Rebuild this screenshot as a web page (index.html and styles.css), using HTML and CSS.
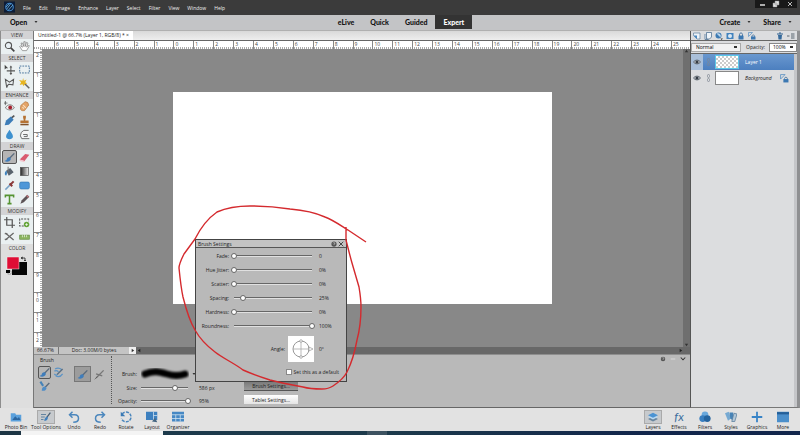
FILE: index.html
```html
<!DOCTYPE html>
<html lang="en">

<head>
    <meta charset="UTF-8">
    <meta name="viewport" content="width=device-width, initial-scale=1.0">
    <title>Untitled-1 - Photo Editor</title>
    <link rel="stylesheet" href="styles.css">
</head>

<body>
    <!-- Shared icons -->
    <svg class="sprite" aria-hidden="true">
        <symbol id="brush" viewBox="0 0 16 16">
            <path d="M15 2 L8 9" stroke="#5b6b7c" stroke-width="2" fill="none" />
            <path d="M9 8 C6 7 4 9 4 11 C3 13 2 13 1 13 C4 15 9 14 10 10 Z" fill="#3f7dbb" />
        </symbol>
        <symbol id="caret" viewBox="0 0 8 8"><path d="M1 2 H7 L4 6 Z" fill="#333" /></symbol>
        <symbol id="eye" viewBox="0 0 16 16">
            <path d="M1 8 C4 3 12 3 15 8 C12 13 4 13 1 8 Z" fill="#cfd3d8" stroke="#4b5560" stroke-width="1.6" />
            <circle cx="8" cy="8" r="3.2" fill="#353c44" />
        </symbol>
        <symbol id="link" viewBox="0 0 8 16">
            <rect x="2" y="1" width="4" height="6" rx="2" fill="none" stroke="#7d8791" stroke-width="1.5" />
            <rect x="2" y="9" width="4" height="6" rx="2" fill="none" stroke="#7d8791" stroke-width="1.5" />
        </symbol>
        <symbol id="lock" viewBox="0 0 16 16">
            <path d="M5 8 V5 C5 1 11 1 11 5 V8" fill="none" stroke="#47749f" stroke-width="2" />
            <rect x="3" y="7" width="10" height="8" rx="1" fill="#3c78b2" />
        </symbol>
        <symbol id="locklayer" viewBox="0 0 16 16">
            <path d="M1 9 V1 H9 M1 9 L9 1" fill="none" stroke="#5f93c4" stroke-width="1.5" />
            <path d="M8 10 V8 C8 5 13 5 13 8 V10" fill="none" stroke="#47749f" stroke-width="1.5" />
            <rect x="6" y="9" width="9" height="6" fill="#3c78b2" />
        </symbol>
    </svg>

    <header class="menubar">
        <svg class="logo" viewBox="0 0 16 16">
            <rect width="16" height="16" fill="#0d1d38" />
            <circle cx="8" cy="8" r="5.5" fill="none" stroke="#3f86c9" stroke-width="1.6" />
            <path d="M4 11 L10 3 M6 13 L13 5 M3 8 L8 3" stroke="#68b2e4" stroke-width="1.2" />
        </svg>
        <nav class="menu">
            <a href="#">File</a>
            <a href="#">Edit</a>
            <a href="#">Image</a>
            <a href="#">Enhance</a>
            <a href="#">Layer</a>
            <a href="#">Select</a>
            <a href="#">Filter</a>
            <a href="#">View</a>
            <a href="#">Window</a>
            <a href="#">Help</a>
        </nav>
        <div class="window-buttons">
            <button type="button" aria-label="Minimize"><svg viewBox="0 0 12 8"><path d="M4 5 H9" stroke="#ddd" stroke-width="1.5" /></svg></button>
            <button type="button" aria-label="Restore"><svg viewBox="0 0 12 8"><path d="M5 1 H9 V5 H5 Z M3 3 H7 V7 H3 Z" fill="#e5e5e5" stroke="#888" stroke-width=".5" /></svg></button>
            <button type="button" aria-label="Close"><svg viewBox="0 0 12 8"><path d="M4 2 L8 6 M8 2 L4 6" stroke="#bbb" stroke-width="1" /></svg></button>
        </div>
    </header>

    <div class="modebar">
        <button type="button" class="open">Open <svg><use href="#caret" /></svg></button>
        <nav class="modes">
            <a href="#">eLive</a>
            <a href="#">Quick</a>
            <a href="#">Guided</a>
            <a href="#" class="active">Expert</a>
        </nav>
        <div class="share">
            <button type="button">Create <svg><use href="#caret" /></svg></button>
            <button type="button">Share <svg><use href="#caret" /></svg></button>
        </div>
    </div>

    <main class="workspace">
        <aside class="tools">
            <h2>VIEW</h2>
            <div class="tool-grid">
                <button type="button" aria-label="Zoom"><svg viewBox="0 0 16 16"><circle cx="6.5" cy="6.5" r="4.5" fill="#e8f0f4" stroke="#555" stroke-width="1.6" /><path d="M10 10 L15 15" stroke="#444" stroke-width="2.4" /></svg></button>
                <button type="button" aria-label="Hand"><svg viewBox="0 0 16 16"><path d="M5 14 L1 8 L2 7 L5 9 L3 3 L5 3 L7 8 L7 1 H9 L9 8 L11 2 L13 3 L11 9 L14 6 L15 7 L11 14 Z" fill="#fff" stroke="#777" /></svg></button>
            </div>
            <h2>SELECT</h2>
            <div class="tool-grid">
                <button type="button" aria-label="Move"><svg viewBox="0 0 16 16"><path d="M1 1 V8 L3 6 L6 6 Z" fill="#444" /><path d="M10 4 V15 M4 10 H16" stroke="#555" stroke-width="1.5" /><path d="M8 5 L10 2 L12 5 Z M8 13 L10 16 L12 13 Z" fill="#555" /></svg></button>
                <button type="button" aria-label="Marquee"><svg viewBox="0 0 16 16"><rect x="1" y="3" width="14" height="10" fill="none" stroke="#3c6994" stroke-width="1.3" stroke-dasharray="2.5 1.5" /></svg></button>
                <button type="button" aria-label="Lasso"><svg viewBox="0 0 16 16"><path d="M4 14 L2 2 L8 6 L14 2 L13 10 L7 9 Q5 10 4 14" fill="none" stroke="#555" stroke-width="1.5" /></svg></button>
                <button type="button" aria-label="Magic wand"><svg viewBox="0 0 16 16"><path d="M8 8 L15 15" stroke="#666" stroke-width="2.2" /><path d="M6 0 L7 4 L11 2 L9 6 L12 8 L8 9 L7 12 L5 9 L1 10 L3 6 L0 3 L5 4 Z" fill="#e6b521" /></svg></button>
            </div>
            <h2>ENHANCE</h2>
            <div class="tool-grid">
                <button type="button" aria-label="Red eye"><svg viewBox="0 0 16 16"><path d="M2 0 V6 M0 3 H5" stroke="#444" /><path d="M2 10 C5 4 12 4 15 10 C11 14 6 14 2 10 Z" fill="#eee" stroke="#555" /><circle cx="9" cy="9.5" r="2.8" fill="#a31f2d" /></svg></button>
                <button type="button" aria-label="Spot healing"><svg viewBox="0 0 16 16"><path d="M3 6 L9 1 Q14 1 14 6 L8 14 Q2 15 2 10 Z" fill="#e4a467" stroke="#b57a45" /><path d="M6 6 L10 10 M5 9 L7 11" stroke="#fae0c0" stroke-width="1.5" /></svg></button>
                <button type="button" aria-label="Smart brush"><svg viewBox="0 0 16 16"><path d="M15 1 L10 5" stroke="#555" stroke-width="2.5" /><path d="M10 2 L14 7 L7 14 L1 15 L3 8 Z" fill="#3c7db8" /></svg></button>
                <button type="button" aria-label="Clone stamp"><svg viewBox="0 0 16 16"><path d="M6 1 H10 V4 L9 8 H14 V12 H2 V8 H7 L6 4 Z" fill="#b57233" /><path d="M2 14 H14" stroke="#82532a" stroke-width="2" /></svg></button>
                <button type="button" aria-label="Blur"><svg viewBox="0 0 16 16"><path d="M8 1 C10 5 13 7 13 11 C13 16 3 16 3 11 C3 7 6 5 8 1 Z" fill="#3d91cf" /></svg></button>
                <button type="button" aria-label="Sponge"><svg viewBox="0 0 16 16"><path d="M14 2 H7 Q2 4 2 10 L4 14 H15 M6 8 H12 V11 H7" fill="#f5f5f5" stroke="#6a6a6a" stroke-width="1.4" /></svg></button>
            </div>
            <h2>DRAW</h2>
            <div class="tool-grid">
                <button type="button" aria-label="Brush" class="selected"><svg><use href="#brush" /></svg></button>
                <button type="button" aria-label="Eraser"><svg viewBox="0 0 16 16"><path d="M1 11 L9 3 L15 4 L8 13 Z" fill="#d95b6f" /><path d="M1 11 L8 13 V15 L1 13 Z" fill="#f3c5cc" /></svg></button>
                <button type="button" aria-label="Paint bucket"><svg viewBox="0 0 16 16"><path d="M3 7 L9 3 L14 9 L7 14 Z" fill="#59636d" /><path d="M6 1 V8" stroke="#777" stroke-width="1.5" /><path d="M2 8 Q0 13 3 14 Q5 12 4 7 Z" fill="#3b80bd" /></svg></button>
                <button type="button" aria-label="Gradient"><svg viewBox="0 0 16 16"><defs><linearGradient id="fade"><stop stop-color="#222" /><stop offset="1" stop-color="#f4f4f4" /></linearGradient></defs><rect x="2" y="2" width="12" height="12" fill="url(#fade)" stroke="#555" /></svg></button>
                <button type="button" aria-label="Color picker"><svg viewBox="0 0 16 16"><path d="M2 14 L9 7" stroke="#77a1c5" stroke-width="2.2" /><path d="M8 5 L12 9 M10 6 L14 2" stroke="#8a3838" stroke-width="3" /></svg></button>
                <button type="button" aria-label="Shape"><svg viewBox="0 0 16 16"><rect x="1" y="3" width="14" height="10" rx="2" fill="#4e97d8" stroke="#377ab5" /></svg></button>
                <button type="button" aria-label="Type"><svg viewBox="0 0 16 16"><path d="M2 5 V2 H14 V5 M8 2 V14 M5 14 H11" stroke="#559332" stroke-width="2.2" fill="none" /></svg></button>
                <button type="button" aria-label="Pencil"><svg viewBox="0 0 16 16"><path d="M2 14 L4 9 L12 1 L15 4 L7 12 Z" fill="#5c5356" /><path d="M11 2 L14 5" stroke="#c57a80" stroke-width="2" /></svg></button>
            </div>
            <h2>MODIFY</h2>
            <div class="tool-grid">
                <button type="button" aria-label="Crop"><svg viewBox="0 0 16 16"><path d="M4 0 V12 H16 M0 4 H12 V16" fill="none" stroke="#555" stroke-width="1.8" /></svg></button>
                <button type="button" aria-label="Recompose"><svg viewBox="0 0 16 16"><path d="M7 13 H1 V3 H14 V6" fill="none" stroke="#555" stroke-width="1.5" stroke-dasharray="3 1.5" /><circle cx="11" cy="11" r="4" fill="#65a53b" /><path d="M9 11 H13 M11 9 V13" stroke="#fff" /></svg></button>
                <button type="button" aria-label="Content move"><svg viewBox="0 0 16 16"><path d="M2 3 L14 13 M2 13 L14 3" fill="none" stroke="#666" stroke-width="1.8" /><path d="M1 4 H5 M1 12 H5" stroke="#666" stroke-width="1.8" /></svg></button>
                <button type="button" aria-label="Straighten"><svg viewBox="0 0 16 16"><rect x="1" y="6" width="14" height="6" fill="#8bb561" stroke="#638c43" /><path d="M5 6 V9 M8 5 V9 M11 6 V9" stroke="#eef5e8" /></svg></button>
            </div>
            <h2 class="plain">COLOR</h2>
            <svg class="swatches" viewBox="0 0 22 20">
                <rect x="6" y="6" width="15" height="13" fill="#050505" />
                <rect x="1" y="1" width="12" height="12" fill="#df0d35" stroke="#eee" stroke-width=".5" />
                <path d="M15 2 H19 V5 M17 1 L15 2 L17 3 M18 4 L19 5 L20 4" stroke="#222" stroke-width=".8" fill="none" />
                <rect x="2" y="15" width="3" height="3" fill="#fff" stroke="#555" stroke-width=".5" />
                <rect x="0" y="14" width="4" height="3" fill="#000" />
            </svg>
        </aside>

        <section class="editor">
            <div class="tabs"><a href="#" class="tab">Untitled-1 @ 66.7% (Layer 1, RGB/8) * &times;</a></div>
            <div class="ruler-x" id="rulerX"></div>
            <div class="stage">
                <div class="ruler-y" id="rulerY"></div>
                <div class="canvas-area"><div class="document"></div></div>
                <div class="scroll-y"><svg viewBox="0 0 6 6"><path d="M1 4 L3 1 L5 4 Z" fill="#333" /></svg><svg viewBox="0 0 6 6"><path d="M1 2 L3 5 L5 2 Z" fill="#333" /></svg></div>
            </div>
            <div class="status">
                <span class="zoom-level">66.67%</span>
                <span class="doc-size">Doc: 3.00M/0 bytes</span>
                <span class="status-more"><svg viewBox="0 0 6 6"><path d="M2 1 L5 3 L2 5 Z" fill="#333" /></svg></span>
                <span class="scroll-x"><svg viewBox="0 0 6 6"><path d="M4 1 L1 3 L4 5 Z" fill="#222" /></svg><svg viewBox="0 0 6 6"><path d="M2 1 L5 3 L2 5 Z" fill="#222" /></svg></span>
            </div>

            <div class="options">
                <div class="brush-kinds">
                    <h3>Brush</h3>
                    <div class="kind-grid">
                        <button type="button" aria-label="Brush tool" class="selected"><svg><use href="#brush" /></svg></button>
                        <button type="button" aria-label="Impressionist brush"><svg viewBox="0 0 16 16"><path d="M3 3 Q8 0 13 4 M2 6 Q5 4 8 7 M4 13 Q10 16 14 10 M2 10 Q4 13 7 11" stroke="#5b93c6" stroke-width="1.8" fill="none" /><path d="M14 3 L6 11" stroke="#5b7084" stroke-width="2" /></svg></button>
                        <button type="button" aria-label="Color replacement"><svg viewBox="0 0 16 16"><path d="M2 1 L6 7" stroke="#4482b8" stroke-width="3" /><path d="M15 3 L9 9" stroke="#5b6b7c" stroke-width="2" /><path d="M9 8 Q4 8 4 14 Q10 15 11 10 Z" fill="#4f8dc7" /></svg></button>
                    </div>
                </div>
                <div class="brush-modes">
                    <button type="button" aria-label="Brush mode" class="selected"><svg><use href="#brush" /></svg></button>
                    <button type="button" aria-label="Airbrush mode"><svg viewBox="0 0 16 16"><path d="M14 2 L3 13 M3 7 L12 10" stroke="#777" stroke-width="2" /><path d="M1 15 L5 11" stroke="#555" /></svg></button>
                </div>
                <div class="brush-settings">
                    <span class="label">Brush:</span>
                    <button type="button" class="stroke-picker" aria-label="Brush preset">
                        <svg viewBox="0 0 50 12"><defs><filter id="soft" x="-10%" y="-200%" width="120%" height="500%"><feGaussianBlur stdDeviation=".8" /></filter></defs><path d="M5 6 C14 2 20 4 27 6 C34 8 39 8 45 6" fill="none" stroke="#050505" stroke-width="7" stroke-linecap="round" filter="url(#soft)" /></svg>
                    </button>
                    <svg class="picker-caret"><use href="#caret" /></svg>
                    <label for="size">Size:</label>
                    <input type="range" id="size" min="0" max="100" value="72">
                    <output for="size">586 px</output>
                    <label for="brushOpacity">Opacity:</label>
                    <input type="range" id="brushOpacity" min="0" max="100" value="100">
                    <output for="brushOpacity">95%</output>
                </div>
                <div class="option-buttons">
                    <button type="button" class="pressed">Brush Settings...</button>
                    <button type="button">Tablet Settings...</button>
                </div>
                <div class="option-icons">
                    <svg viewBox="0 0 8 8"><circle cx="4" cy="4" r="3" fill="#555" /><path d="M3 3 Q4 1 5 3 L4 5" fill="none" stroke="#ddd" stroke-width=".8" /></svg>
                    <svg viewBox="0 0 8 8"><path d="M1 4 H7" stroke="#d7d7d7" stroke-width="1.5" /></svg>
                    <svg viewBox="0 0 8 8"><path d="M1 2 L4 5 L7 2" fill="none" stroke="#333" stroke-width="1.4" /></svg>
                </div>
            </div>
        </section>

        <aside class="layers">
            <div class="layer-actions">
                <button type="button" aria-label="New layer"><svg viewBox="0 0 16 16"><path d="M1 2 H14 V14 H8 L1 7 Z" fill="#eef3f8" stroke="#5d7e9d" stroke-width="1.4" /><path d="M1 7 H8 V14" fill="#4888c0" /></svg></button>
                <button type="button" aria-label="New group"><svg viewBox="0 0 16 16"><path d="M5 1 H15 V10 L11 14 H5 Z M2 4 V15 H9" fill="#eef3f8" stroke="#4a6d90" stroke-width="1.5" /></svg></button>
                <button type="button" aria-label="Adjustment layer"><svg viewBox="0 0 16 16"><circle cx="7" cy="7" r="6" fill="#3d7ab3" /><path d="M3 3 L11 11 A6 6 0 0 0 3 3" fill="#b9d3e9" /><path d="M11 13 H16 L13 16 Z" fill="#333" /></svg></button>
                <button type="button" aria-label="Layer mask"><svg viewBox="0 0 16 16"><rect x="1" y="2" width="14" height="12" fill="#4383be" /><circle cx="8" cy="8" r="4" fill="#dbe8f3" /></svg></button>
                <button type="button" aria-label="Lock all"><svg><use href="#lock" /></svg></button>
                <button type="button" aria-label="Lock transparency"><svg><use href="#locklayer" /></svg></button>
                <button type="button" aria-label="Delete layer" class="delete"><svg viewBox="0 0 16 16"><path d="M2 4 H14 M6 2 H10" stroke="#2f5f8d" stroke-width="2" /><path d="M4 6 H12 L11 15 H5 Z" fill="#34699b" /></svg></button>
                <button type="button" aria-label="Panel menu"><svg viewBox="0 0 16 16"><path d="M0 8 H5 M8 4 H15 M8 8 H15 M8 12 H15" stroke="#5a6671" stroke-width="2" /></svg></button>
            </div>
            <div class="blend">
                <select aria-label="Blend mode">
                    <option>Normal</option>
                    <option>Multiply</option>
                </select>
                <label for="layerOpacity">Opacity:</label>
                <input type="text" id="layerOpacity" value="100%">
            </div>
            <div class="layer-list">
                <div class="layer selected">
                    <svg class="eye"><use href="#eye" /></svg>
                    <svg class="link"><use href="#link" /></svg>
                    <span class="thumb checker"></span>
                    <span class="name">Layer 1</span>
                </div>
                <div class="layer">
                    <svg class="eye"><use href="#eye" /></svg>
                    <svg class="link"><use href="#link" /></svg>
                    <span class="thumb"></span>
                    <span class="name"><em>Background</em></span>
                    <svg class="locked"><use href="#locklayer" /></svg>
                </div>
            </div>
        </aside>
    </main>

    <footer class="taskbar">
        <div class="task-group">
            <button type="button" class="wide"><svg viewBox="0 0 16 16"><path d="M1 3 H7 L8 5 H15 V14 H1 Z" fill="#5aa0dc" /><path d="M3 12 L7 7 L10 10 L12 8 L14 12 Z" fill="#2b659f" /></svg><span>Photo Bin</span></button>
            <button type="button" class="wide on"><svg viewBox="0 0 16 16"><path d="M0 4 H8 M0 8 H6 M0 12 H4" stroke="#5c7f9d" stroke-width="1.5" /><path d="M15 1 L9 9" stroke="#465c70" stroke-width="2" /><path d="M10 7 Q6 8 5 14 Q11 14 11 9 Z" fill="#3f7fbd" /></svg><span>Tool Options</span></button>
            <button type="button"><svg viewBox="0 0 16 16"><path d="M6 1 L2 5 L6 9 M2 5 H9 Q14 5 14 10 Q14 15 7 15" fill="none" stroke="#4c87bd" stroke-width="2" /></svg><span>Undo</span></button>
            <button type="button"><svg viewBox="0 0 16 16"><path d="M10 1 L14 5 L10 9 M14 5 H7 Q2 5 2 10 Q2 15 9 15" fill="none" stroke="#4c87bd" stroke-width="2" /></svg><span>Redo</span></button>
            <button type="button"><svg viewBox="0 0 16 16"><path d="M3 4 A6.5 6.5 0 1 1 2 10" fill="none" stroke="#4c87bd" stroke-width="2" stroke-dasharray="4 1.5" /><path d="M1 1 V7 H7 Z" fill="#3979b4" /></svg><span>Rotate</span></button>
            <button type="button"><svg viewBox="0 0 16 16"><rect y="1" width="15" height="11" fill="#3d80bf" /><path d="M10 1 V12 M10 6 H15" stroke="#d4e3ef" /><path d="M8 14 L12 9 L15 15 Z" fill="#456683" /></svg><span>Layout</span></button>
            <button type="button"><svg viewBox="0 0 16 16"><rect y="1" width="16" height="13" fill="#4688c4" /><path d="M0 5 H16 M5 5 V14 M11 5 V14 M0 10 H16" stroke="#d5e5f2" /></svg><span>Organizer</span></button>
        </div>
        <div class="task-group">
            <button type="button" class="on"><svg viewBox="0 0 16 16"><path d="M0 11 L8 7 L16 11 L8 15 Z" fill="#68859e" /><path d="M0 8 L8 4 L16 8 L8 12 Z" fill="#b9d9f2" /><path d="M0 5 L8 1 L16 5 L8 9 Z" fill="#4b93d3" /></svg><span>Layers</span></button>
            <button type="button"><i class="fx">fx</i><span>Effects</span></button>
            <button type="button"><svg viewBox="0 0 16 16"><circle cx="8" cy="5" r="4.5" fill="#69a8dc" /><circle cx="5" cy="10" r="4.5" fill="#397fc0" /><circle cx="11" cy="10" r="4.5" fill="#24649f" /></svg><span>Filters</span></button>
            <button type="button"><svg viewBox="0 0 16 16"><path d="M0 3 L5 1 L8 10 L4 13 Z" fill="#76a9d2" /><path d="M6 2 H11 V13 L7 10 Z" fill="#4783b6" /><path d="M12 3 L16 4 L13 14 H9 Z" fill="#b3c8d9" stroke="#587c9b" /></svg><span>Styles</span></button>
            <button type="button"><svg viewBox="0 0 16 16"><path d="M8 1 V15 M1 8 H15" stroke="#3884c7" stroke-width="2.4" /></svg><span>Graphics</span></button>
            <button type="button"><svg viewBox="0 0 16 16"><rect y="1" width="16" height="14" fill="#4b8fcb" /><path d="M0 3 H16" stroke="#245f98" stroke-width="3" /></svg><span>More</span></button>
        </div>
    </footer>
    <div class="desktop-strip"></div>

    <!-- Brush settings window -->
    <form class="dialog">
        <div class="dialog-title">
            <span>Brush Settings</span>
            <button type="button" aria-label="Help"><svg viewBox="0 0 8 8"><circle cx="4" cy="4" r="3.5" fill="#555" /><path d="M3 3 Q4 1 5 3 L4 5" stroke="#ddd" fill="none" /></svg></button>
            <button type="button" aria-label="Close"><svg viewBox="0 0 8 8"><path d="M1 1 L7 7 M7 1 L1 7" stroke="#444" stroke-width="1.3" /></svg></button>
        </div>
        <div class="dialog-body">
            <label for="fadeSteps">Fade:</label><input type="range" id="fadeSteps" value="0"><output>0</output>
            <label for="hue">Hue Jitter:</label><input type="range" id="hue" value="0"><output>0%</output>
            <label for="scatter">Scatter:</label><input type="range" id="scatter" value="0"><output>0%</output>
            <label for="spacing">Spacing:</label><input type="range" id="spacing" value="12"><output>25%</output>
            <label for="hardness">Hardness:</label><input type="range" id="hardness" value="0"><output>0%</output>
            <label for="roundness">Roundness:</label><input type="range" id="roundness" value="100"><output>100%</output>
        </div>
        <div class="angle">
            <span>Angle:</span>
            <svg viewBox="0 0 26 26"><rect width="26" height="26" fill="#fff" /><circle cx="13" cy="13" r="8" fill="none" stroke="#999" /><path d="M13 5 V21 M5 13 H21" stroke="#aaa" stroke-width=".8" /><circle cx="13" cy="5" r="1.3" fill="#fff" stroke="#888" stroke-width=".6" /><circle cx="13" cy="21" r="1.3" fill="#fff" stroke="#888" stroke-width=".6" /><path d="M21 11 L25 13 L21 15 Z" fill="#fff" stroke="#888" stroke-width=".6" /></svg>
            <output>0&deg;</output>
        </div>
        <div class="default-row">
            <input type="checkbox" id="setDefault">
            <label for="setDefault">Set this as a default</label>
        </div>
    </form>

    <!-- Hand drawn mark -->
    <svg class="annotation" viewBox="0 0 200 190" aria-hidden="true">
        <path d="M186 42 L168 30 C160 25 153 20 145 17 C134 12 122 10 110 9 C97 7 83 6 70 6 C56 6 46 8 37 12 C27 19 20 29 15 39 L4 54 C1 60 -1 64 -1 68 C0 78 1 88 3 97 C6 109 9 120 15 130 C20 139 27 146 35 152 C44 159 54 163 63 170 C72 174 81 177 90 180 C101 183 112 185 123 187 C130 189 136 189 142 189 C147 189 150 188 153 186 C159 182 164 178 167 172 C172 162 175 151 177 140 C180 129 181 118 181 107 C181 100 180 93 179 87 L172 63 C170 56 168 48 166 40 V27" />
    </svg>

    <script>
        // Fill a ruler with numbered cells, counting down to 0 and back up
        function buildRuler(id, before, after) {
            const ruler = document.getElementById(id);
            for (let i = -before; i <= after; i++) {
                const cell = document.createElement('span');
                cell.textContent = Math.abs(i);
                ruler.appendChild(cell);
            }
        }

        buildRuler('rulerX', 6, 25);
        buildRuler('rulerY', 2, 12);
    </script>
</body>

</html>
```
FILE: styles.css
```css
* {
    box-sizing: border-box;
}

body {
    margin: 0;
    height: 100vh;
    display: flex;
    flex-direction: column;
    overflow: hidden;
    font-family: "Open Sans", "Liberation Sans", sans-serif;
    font-size: 5px;
    line-height: 8px;
    color: #222;
    background-color: #dcdddf;
}

a {
    color: inherit;
    text-decoration: none;
}

button {
    display: flex;
    align-items: center;
    justify-content: center;
    margin: 0;
    padding: 0;
    border: none;
    background: none;
    color: inherit;
    font: inherit;
    cursor: pointer;
}

h2,
h3 {
    margin: 0;
    font-size: 5px;
    font-weight: normal;
}

.sprite {
    display: none;
}

/* Top bars */
.menubar {
    display: flex;
    flex: none;
    height: 15px;
    background-color: #3b3b3b;
    color: #f0f0f0;
}

.logo {
    width: 11px;
    height: 12px;
    margin: 1px 8px 0 4px;
}

.menu {
    display: flex;
    flex: 1;
    align-items: center;
    gap: 8px;
}

.window-buttons {
    display: flex;
    height: 8px;
    margin-right: 3px;
    background-color: #191919;
}

.window-buttons svg {
    width: 14px;
    height: 8px;
}

.modebar {
    display: grid;
    grid-template-columns: 1fr auto 1fr;
    flex: none;
    height: 16px;
    padding: 0 8px 1px 10px;
    background-color: #c3c4c6;
    border-bottom: 1px solid #b0b0b0;
    font-family: Lato, "Open Sans", sans-serif;
    font-size: 7px;
    font-weight: 900;
    color: #111;
}

.modebar button {
    gap: 7px;
}

.modebar svg {
    width: 4px;
    height: 4px;
}

.open {
    justify-self: start;
}

.modes {
    display: flex;
}

.modes a {
    display: flex;
    align-items: center;
    padding: 0 8px;
}

.modes .active {
    background-color: #333;
    color: #fff;
}

.share {
    display: flex;
    justify-content: flex-end;
    gap: 12px;
}

/* Workspace */
.workspace {
    display: grid;
    grid-template-columns: 34px 1fr 110px;
    flex: 1;
    min-height: 0;
}

.tools {
    border-left: 1px solid #8d8d8d;
    border-right: 1px solid #777;
    background-color: #dedede;
}

.tools h2 {
    height: 8px;
    text-align: center;
    background-color: #d3d3d5;
    color: #333;
}

.tools .plain {
    background: none;
}

.tool-grid {
    display: grid;
    grid-template-columns: 1fr 1fr;
    grid-auto-rows: 14px;
    padding: 0 1px 1px;
    background-color: #eaf0f1;
}

.tool-grid svg {
    width: 11px;
    height: 11px;
}

.tool-grid .selected,
.kind-grid .selected,
.brush-modes .selected {
    border: 1px solid #555;
    border-radius: 2px;
    background-color: #b5b5b5;
}

.brush-modes .selected {
    border-color: #777;
    border-radius: 0;
    background-color: #9c9c9c;
}

.swatches {
    display: block;
    width: 22px;
    height: 20px;
    margin: 4px auto;
}

.editor {
    display: flex;
    flex-direction: column;
    min-width: 0;
    background-color: #b9b9b9;
}

.tabs {
    flex: none;
    height: 10px;
    border-bottom: 1px solid #666;
    background: linear-gradient(#d9d9d9, #eee);
}

.tab {
    display: inline-block;
    height: 9px;
    padding: 0 4px;
    background-color: #fff;
}

.ruler-x {
    display: grid;
    grid-template-columns: repeat(31, 1fr) 19px;
    flex: none;
    height: 8px;
    padding-left: 20px;
    background: repeating-linear-gradient(90deg, #aaa 0 1px, transparent 1px 2px) bottom / 100% 2px no-repeat #fff;
    color: #444;
}

.ruler-x span {
    border-left: 1px solid #888;
    padding-left: 1px;
    line-height: 7px;
}

.stage {
    display: grid;
    grid-template-columns: 8px 1fr 7px;
    flex: 1;
    min-height: 0;
}

.ruler-y {
    display: grid;
    grid-template-rows: repeat(14, 1fr) 15px;
    padding-top: 3px;
    background: repeating-linear-gradient(#aaa 0 1px, transparent 1px 2px) right / 2px 100% no-repeat #fff;
    color: #444;
}

.ruler-y span {
    width: 8px;
    padding: 0 3px 0 2px;
    border-top: 1px solid #888;
    line-height: 5px;
    word-break: break-all;
}

.canvas-area {
    display: flex;
    align-items: center;
    justify-content: center;
    background-color: #888;
}

.document {
    width: 59%;
    aspect-ratio: 16 / 9;
    background-color: #fff;
}

.scroll-y {
    display: flex;
    flex-direction: column;
    justify-content: space-between;
    align-items: center;
    background-color: #6f6f6f;
}

.scroll-y svg,
.status svg {
    width: 5px;
    height: 5px;
}

.status {
    display: flex;
    flex: none;
    height: 8px;
    border-bottom: 1px solid #8e8e8e;
    line-height: 7px;
    background-color: #c4c4c4;
}

.zoom-level {
    width: 25px;
    padding-left: 3px;
    border-right: 1px solid #777;
}

.doc-size {
    width: 70px;
    text-align: center;
}

.status-more {
    display: flex;
    align-items: center;
    padding: 0 1px;
    background-color: #eee;
}

.scroll-x {
    display: flex;
    flex: 1;
    align-items: center;
    justify-content: space-between;
    padding: 0 7px 0 1px;
    background-color: #686868;
}

/* Tool options */
.options {
    display: flex;
    flex: none;
    height: 53px;
    padding: 1px 4px 3px;
    border-bottom: 1px solid #666;
}

.brush-kinds h3 {
    padding-left: 2px;
}

.kind-grid {
    display: grid;
    grid-template-columns: 13px 13px;
    grid-auto-rows: 13px;
    gap: 1px;
    padding-top: 2px;
}

.kind-grid svg,
.brush-modes svg {
    width: 11px;
    height: 11px;
}

.brush-modes {
    display: flex;
    align-items: flex-start;
    margin-left: 9px;
    padding: 10px 3px 0 0;
    border-right: 1px dotted #555;
}

.brush-modes button {
    width: 17px;
    height: 16px;
}

.brush-settings {
    display: grid;
    grid-template-columns: 25px 53px 24px;
    grid-template-rows: 14px 13px 13px;
    column-gap: 1px;
    align-items: center;
    padding-top: 11px;
}

.brush-settings label,
.brush-settings .label {
    text-align: right;
}

.brush-settings output {
    padding-left: 7px;
}

.stroke-picker svg {
    width: 50px;
    height: 12px;
}

.picker-caret {
    width: 4px;
    height: 4px;
}

.option-buttons {
    display: flex;
    flex-direction: column;
    justify-content: flex-end;
    gap: 4px;
    margin-left: 28px;
}

.option-buttons button {
    width: 54px;
    height: 9px;
    background: linear-gradient(#fff, #e4e4e4);
}

.option-buttons .pressed {
    height: 10px;
    border-bottom: 1px solid #555;
    background: linear-gradient(#777, #999);
}

.option-icons {
    display: flex;
    gap: 4px;
    margin-left: auto;
}

.option-icons svg {
    width: 6px;
    height: 6px;
}

/* Sliders */
input[type="range"] {
    -webkit-appearance: none;
    appearance: none;
    width: 100%;
    height: 8px;
    margin: 0;
    background: linear-gradient(#666 0 1px, #e0e0e0 1px 2px) center / calc(100% - 6px) 2px no-repeat;
}

input[type="range"]::-webkit-slider-thumb {
    -webkit-appearance: none;
    width: 6px;
    height: 6px;
    border: 1px solid #666;
    border-radius: 50%;
    background-color: #fff;
}

/* Layers panel */
.layers {
    display: flex;
    flex-direction: column;
    border-left: 1px solid #555;
    border-right: 3px solid #8f9092;
    border-bottom: 1px solid #777;
    background-color: #dcdddf;
}

.layer-actions {
    display: flex;
    align-items: center;
    gap: 3px;
    height: 10px;
    padding: 0 2px;
    border-bottom: 1px solid #666;
}

.layer-actions svg {
    width: 8px;
    height: 8px;
}

.layer-actions .delete {
    margin-left: auto;
}

.blend {
    display: flex;
    align-items: center;
    height: 13px;
    border-bottom: 1px solid #666;
}

.blend select {
    -webkit-appearance: none;
    appearance: none;
    width: 50px;
    height: 9px;
    margin-right: 5px;
    padding: 0 4px;
    border: 1px solid #aaa;
    border-radius: 0;
    background: linear-gradient(#333, #333) right 3px center / 3px 2px no-repeat #f2f2f2;
    font: inherit;
    line-height: 7px;
}

.blend input {
    width: 28px;
    height: 9px;
    margin-left: auto;
    padding: 0 3px;
    border: 1px solid #888;
    background: linear-gradient(#333, #333) right 3px center / 3px 2px no-repeat #fff;
    font: inherit;
}

.layer-list {
    flex: 1;
    border-right: 3px solid #c5c6c9;
}

.layer {
    display: flex;
    align-items: center;
    height: 16px;
}

.layer.selected {
    background: linear-gradient(#6a98cf, #4c7fbf);
    color: #fff;
}

.eye {
    width: 12px;
    height: 8px;
}

.selected .eye {
    height: 16px;
    padding: 4px 2px;
    background-color: #a9bfd9;
}

.link {
    width: 11px;
    height: 8px;
}

.thumb {
    width: 24px;
    height: 14px;
    margin: 0 6px 0 1px;
    border: 1px solid #888;
    background-color: #fff;
}

.checker {
    border-color: #5cc9e8;
    background: repeating-conic-gradient(#ccc 0 25%, #fff 0 50%) 0 0 / 4px 4px;
}

.locked {
    width: 9px;
    height: 9px;
    margin: 0 5px 0 auto;
}

/* Bottom bar */
.taskbar {
    display: flex;
    justify-content: space-between;
    flex: none;
    height: 23px;
    padding: 1px 4px 0 1px;
    background-color: #e2e2e2;
}

.task-group {
    display: flex;
}

.task-group button {
    flex-direction: column;
    justify-content: space-between;
    width: 26px;
    white-space: nowrap;
}

.task-group .wide {
    width: 30px;
}

.task-group svg {
    width: 12px;
    height: 12px;
    margin-top: 2px;
}

.task-group .on svg {
    width: 18px;
    height: 14px;
    margin-top: 1px;
    padding: 1px 3px;
    border: 1px solid #aaa;
    background-color: #c7cacd;
}

.task-group span {
    line-height: 7px;
}

.task-group .fx {
    padding-top: 4px;
    color: #3d6f9e;
    font-family: Lato, sans-serif;
    font-size: 12px;
}

.desktop-strip {
    flex: none;
    height: 4px;
    background: linear-gradient(90deg, #1d3544 0 21px, #f4f4f4 21px 163px, #1d3a4b 163px 367px, #3d5260 367px 387px, #1d3a4b 387px, #12264b 640px);
}

/* Brush settings window */
.dialog {
    position: absolute;
    top: 239px;
    left: 195px;
    width: 152px;
    height: 143px;
    border: 1px solid #444;
    background-color: #b9b9b9;
}

.dialog-title {
    display: flex;
    align-items: center;
    gap: 1px;
    height: 8px;
    padding: 0 2px;
    border-bottom: 1px solid #555;
    background-color: #c3c3c3;
}

.dialog-title span {
    flex: 1;
}

.dialog-title svg {
    display: block;
    width: 6px;
    height: 6px;
}

.dialog-body {
    display: grid;
    grid-template-columns: 33px 84px 1fr;
    grid-auto-rows: 14px;
    column-gap: 2px;
    align-items: center;
    padding-top: 1px;
}

.dialog-body label {
    text-align: right;
}

.dialog-body output {
    padding-left: 2px;
}

.angle {
    display: flex;
    align-items: center;
    justify-content: flex-end;
    gap: 3px;
    margin-top: 3px;
}

.angle svg {
    width: 26px;
    height: 26px;
}

.angle output {
    width: 29px;
    padding-left: 2px;
}

.default-row {
    display: flex;
    align-items: center;
    justify-content: flex-end;
    gap: 2px;
    padding: 6px 7px 0;
}

.default-row input {
    -webkit-appearance: none;
    appearance: none;
    width: 6px;
    height: 6px;
    margin: 0;
    border: 1px solid #888;
    background-color: #fff;
}

.annotation {
    position: absolute;
    top: 200px;
    left: 180px;
    width: 200px;
    height: 190px;
    fill: none;
    stroke: #d42a2e;
    stroke-width: 1.4;
    stroke-linejoin: round;
    overflow: visible;
    pointer-events: none;
}
```
